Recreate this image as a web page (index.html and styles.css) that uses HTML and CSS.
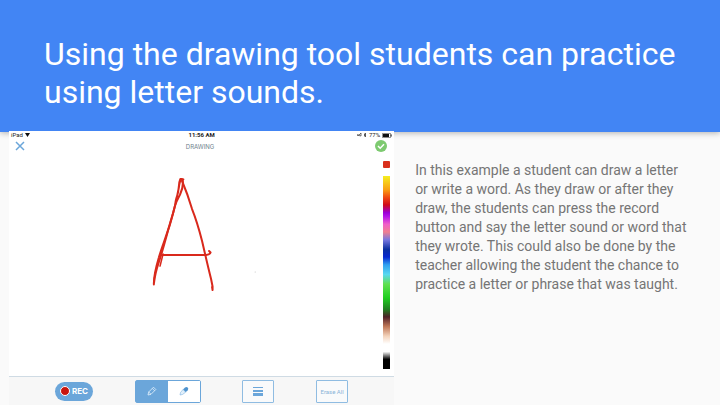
FILE: index.html
```
<!DOCTYPE html>
<html lang="en">
<head>
  <meta charset="UTF-8">
  <meta name="viewport" content="width=device-width, initial-scale=1.0">
  <title>Using the drawing tool</title>
  <link rel="stylesheet" href="styles.css">
</head>
<body>
  <header class="title-bar">
    <h1>Using the drawing tool students can practice using letter sounds.</h1>
  </header>
  <main class="content">
    <section class="tablet">
      <div class="status">
        <span class="status-left">iPad
          <svg width="5" height="4" viewBox="0 0 5 4"><path d="M0 0h5L2.500 4z" fill="#111"/></svg>
        </span>
        <span class="status-time">11:56 AM</span>
        <span class="status-right">
          <svg width="10" height="6" viewBox="0 0 10 6" fill="none" stroke="#333" stroke-width=".7"><path d="M0 3h2l2-2v3zM7 2l2 2-1 1V1l1 1-2 2"/></svg>
          77%
          <svg width="10" height="5" viewBox="0 0 10 5"><rect x=".3" y=".3" width="8.400" height="4.400" rx="1" fill="none" stroke="#111" stroke-width=".6"/><rect x="1" y="1" width="6" height="3" fill="#111"/><path d="M9.200 1.500v2" stroke="#111" stroke-width=".8"/></svg>
        </span>
      </div>
      <div class="nav">
        <button class="icon-button" aria-label="Close">
          <svg width="10" height="10" viewBox="0 0 10 10"><path d="M1 1l8 8M9 1L1 9" stroke="#6ba6da" stroke-width="1.500"/></svg>
        </button>
        <h2>DRAWING</h2>
        <button class="icon-button" aria-label="Done">
          <svg width="12" height="12" viewBox="0 0 12 12"><circle cx="6" cy="6" r="6" fill="#7dca70"/><path d="M3 6l2.200 2.200L9 4.200" fill="none" stroke="#fff" stroke-width="1.500"/></svg>
        </button>
      </div>
      <div class="canvas">
        <svg class="drawing" viewBox="9 153 374 200" preserveAspectRatio="xMinYMin meet" fill="none" stroke="#d9291c" stroke-width="2" stroke-linecap="round" stroke-linejoin="round">
          <path d="M153.800 284.500c-.2-8 2-17 5-27 3-11 8-22 12-37 3-9 5-17 8-33 .5-4 1-7 2.500-8.500l2 .5-3-.5c-2 4-1 10-3 16s-2 6-2 9"/>
          <path d="M182.500 179.500c1 5-.2 10-2.500 15-2 4-4 7-5 11-2 8-4 16-7 25-3 11-6 22-9 31-2 6-4 12-5 21"/>
          <path d="M182 181c3 7 7 18 10 28 4 10 7 20 10 32 3 13 6 26 9 38l1.500 7.500v3.500l-.5-3"/>
          <path d="M161 255h45c2-.2 4-1 4.500-2.500l-1.500-1.500"/>
          <path d="M163 254l-3 12" stroke-width="1.500"/>
          <path d="M255 272h.3" stroke="#ccc" stroke-width="1"/>
        </svg>
        <div class="colors">
          <button class="current-color" aria-label="Current color"></button>
          <div class="spectrum"></div>
        </div>
      </div>
      <div class="tools">
        <button class="rec"><span class="rec-dot"></span>REC</button>
        <div class="pen-group">
          <button class="tool active" aria-label="Pencil">
            <svg width="10" height="10" viewBox="0 0 10 10" fill="none" stroke="#e4f1fb" stroke-width=".8"><path d="M1 9l.7-3L6.500 1.200 8.800 3.500 4 8.300zM1.700 6L4 8.300M5.300 2.400l2.300 2.300"/></svg>
          </button>
          <button class="tool" aria-label="Eraser">
            <svg width="10" height="10" viewBox="0 0 10 10"><path d="M4 3.500l2-2q1.500-1.200 2.700 0t0 2.700l-2 2z" fill="#4f93ce"/><path d="M4 3.500L1.500 6.500 1 9l2.500-.5 3.200-2.300z" fill="#e1effa" stroke="#6ba6da" stroke-width=".5"/></svg>
          </button>
        </div>
        <button class="tool boxed" aria-label="Line width">
          <svg width="10" height="10" viewBox="0 0 10 10" fill="#6ba6da"><path d="M0 1h10v1H0zM0 4h10v2H0zM0 7h10v3H0z"/></svg>
        </button>
        <button class="tool boxed">Erase All</button>
      </div>
    </section>
    <p class="description">In this example a student can draw a letter or write a word. As they draw or after they draw, the students can press the record button and say the letter sound or word that they wrote. This could also be done by the teacher allowing the student the chance to practice a letter or phrase that was taught.</p>
  </main>
</body>
</html>
```
FILE: styles.css
```
* {
  box-sizing: border-box;
  margin: 0;
  padding: 0;
}
body {
  display: flex;
  flex-direction: column;
  min-height: 100vh;
  font-family: Roboto, Arial, sans-serif;
  background-color: #fafafa;
}
button {
  border: none;
  background: none;
  font-family: inherit;
  cursor: pointer;
}
svg {
  display: block;
}
.title-bar {
  position: relative;
  z-index: 1;
  padding: 35px 40px 21px 44px;
  background-color: #4285f4;
  box-shadow: 0 1px 6px rgba(0,0,0,0.3);
}
.title-bar h1 {
  color: #fff;
  font-size: 32px;
  font-weight: normal;
  line-height: 38px;
}
.content {
  flex: 1;
  display: grid;
  grid-template-columns: 13fr 11fr;
  padding-left: 9px;
}
.tablet {
  position: relative;
  z-index: 2;
  display: flex;
  flex-direction: column;
  margin-top: -1px;
  background-color: #fff;
}
.status {
  display: grid;
  grid-template-columns: 1fr auto 1fr;
  align-items: center;
  height: 8px;
  padding: 0 2px;
  color: #222;
  font-size: 6px;
  line-height: 8px;
}
.status-left, .status-right {
  display: flex;
  align-items: center;
  gap: 2px;
}
.status-right {
  justify-content: flex-end;
}
.status-time {
  font-weight: bold;
}
.nav {
  display: flex;
  justify-content: space-between;
  align-items: center;
  height: 14px;
  padding: 0 7px 0 6px;
}
.nav h2 {
  color: #6e7f8c;
  font-family: Inter, Arial, sans-serif;
  font-size: 6px;
  font-weight: normal;
}
.canvas {
  flex: 1;
  display: flex;
  justify-content: space-between;
}
.drawing {
  flex: 1;
  min-width: 0;
}
.colors {
  display: flex;
  flex-direction: column;
  gap: 8px;
  width: 7px;
  margin: 8px 4px 7px 0;
}
.current-color {
  height: 7px;
  border-radius: 1px;
  background-color: #d9301c;
}
.spectrum {
  flex: 1;
  background: linear-gradient(
    #f5ee20 0%,
    #f9a012 7%,
    #f04a12 11%,
    #d00a18 15%,
    #9a00d8 19%,
    #b414e8 21%,
    #f060c8 25%,
    #f08090 29%,
    #7878e0 33%,
    #0a2fa0 38%,
    #0828d0 42%,
    #30a0f0 46%,
    #58d8f0 51%,
    #60e050 56%,
    #20d020 63%,
    #208020 69%,
    #502028 73%,
    #c07858 78%,
    #f4d4bc 83%,
    #fff 87%,
    #fff 91%,
    #000 95%,
    #000 100%
  );
}
.tools {
  display: flex;
  justify-content: space-between;
  align-items: center;
  height: 29px;
  padding: 0 46px;
  border-top: 1px solid #cfdbe4;
  background-color: #f7f7f7;
}
.rec {
  display: flex;
  align-items: center;
  justify-content: center;
  gap: 2px;
  width: 38px;
  height: 19px;
  border-radius: 10px;
  background-color: #6ba6da;
  color: #fff;
  font-family: Inter, Arial, sans-serif;
  font-size: 8px;
  font-weight: bold;
}
.rec-dot {
  width: 10px;
  height: 10px;
  border: 1px solid #fff;
  border-radius: 50%;
  background-color: #c8140c;
}
.pen-group {
  display: flex;
  border: 1px solid #6ba6da;
  border-radius: 2px;
}
.tool {
  display: flex;
  align-items: center;
  justify-content: center;
  width: 32px;
  height: 21px;
  background-color: #fff;
}
.tool.active {
  background-color: #6ba6da;
}
.boxed {
  height: 23px;
  border: 1px solid #8fbce2;
  border-radius: 1px;
  background-color: #f9fafb;
  color: #8ab4d8;
  font-size: 6px;
  white-space: nowrap;
}
.description {
  padding: 29px 28px 0 21px;
  color: #757575;
  font-size: 14px;
  line-height: 19px;
}
```
